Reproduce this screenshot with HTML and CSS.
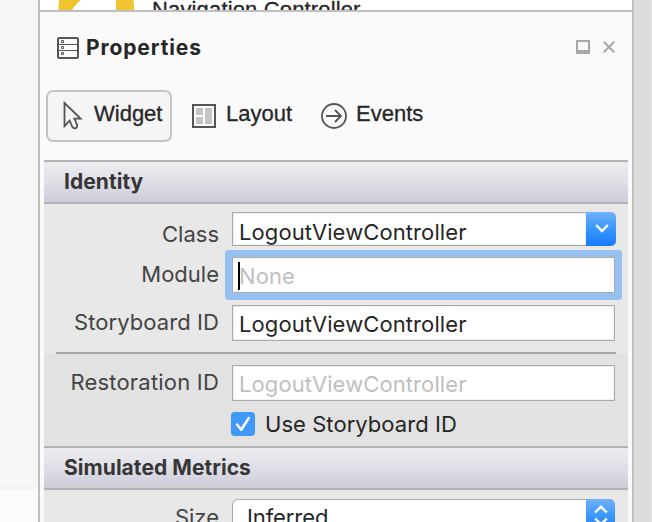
FILE: index.html
```
<!DOCTYPE html>
<html lang="en">
<head>
<meta charset="utf-8">
<title>Properties</title>
<link rel="stylesheet" href="styles.css">
</head>
<body>
<div class="window">
  <div class="gutter-left"><div class="gutter-upper"></div></div>
  <main class="main">
    <div class="canvas-strip">
      <svg class="canvas-icon" width="78" height="10" viewBox="0 0 78 10"><path fill="#f0c330" d="M1 0H23C19 3 16 6 14 10H0.500Q0.500 5 1 0ZM58 0H75.500Q76.200 5 76 10H58Z"/></svg>
      <span class="canvas-title">Navigation Controller</span>
    </div>
    <header class="pad-header">
      <svg class="pad-icon" width="22" height="22" viewBox="0 0 22 22" fill="none" stroke="#555"><rect x="1" y="1" width="20" height="20" rx="1" stroke-width="2"/><path d="M1 7.500H21M1 13.500H21" stroke-width="1.200"/><path d="M4.500 3.500h2v2h-2zM4.500 9.500h2v2h-2zM4.500 15.500h2v2h-2z"/></svg>
      <h1 class="pad-title">Properties</h1>
      <svg class="pad-dock" width="14" height="14" viewBox="0 0 14 14"><path fill="#a8a8a8" fill-rule="evenodd" d="M0 0H14V14H0ZM2 2V10H12V2Z"/></svg>
      <svg class="pad-close" width="12" height="12" viewBox="0 0 12 12"><path d="M.7.700 11.300 11.300M11.300.700.700 11.300" stroke="#a8a8a8" stroke-width="2.100"/></svg>
    </header>
    <nav class="tabs">
      <div class="tab tab-active">
        <svg class="tab-cursor" width="20" height="30" viewBox="0 0 20 30" fill="none" stroke="#555" stroke-width="1.800"><path d="M1.500 3V26.200L6.600 20.600 9.300 26.800Q10.600 29 12.700 28.100 14.800 27 14 24.600L11.400 18.600H17.600Z" stroke-linejoin="miter"/></svg>
        <span class="tab-label">Widget</span>
      </div>
      <div class="tab tab-layout">
        <svg width="24" height="24" viewBox="0 0 24 24"><rect x="1" y="1" width="22" height="22" fill="#fcfcfc" stroke="#555" stroke-width="2"/><path fill="#c5c5c5" d="M4 4h7v7H4zM4 13h7v7H4zM13 4h7v16h-7z"/></svg>
        <span class="tab-label">Layout</span>
      </div>
      <div class="tab tab-events">
        <svg width="26" height="26" viewBox="0 0 26 26" fill="none" stroke="#555" stroke-width="1.800"><circle cx="13" cy="13" r="12"/><path d="M5 13H20M14 7l6 6-6 6"/></svg>
        <span class="tab-label">Events</span>
      </div>
    </nav>
    <section class="sections">
      <h2 class="section-title">Identity</h2>
      <div class="group">
        <div class="row row-class">
          <label class="label label-class">Class</label>
          <div class="field combo"><span class="value">LogoutViewController</span></div>
          <div class="drop"><svg width="14" height="9" viewBox="0 0 14 9"><path d="M1.200 1.200 7 7 12.800 1.200" fill="none" stroke="#fff" stroke-width="2.400"/></svg></div>
        </div>
        <div class="row row-module">
          <label class="label">Module</label>
          <div class="field focused"><span class="caret"></span><span class="value hint">None</span></div>
        </div>
        <div class="row">
          <label class="label storyboard">Storyboard ID</label>
          <div class="field"><span class="value">LogoutViewController</span></div>
        </div>
        <div class="divider"></div>
      </div>
      <div class="group group-restoration">
        <div class="row">
          <label class="label restoration">Restoration ID</label>
          <div class="field"><span class="value hint">LogoutViewController</span></div>
        </div>
        <div class="check-row">
          <div class="checkbox"><svg width="24" height="24" viewBox="0 0 24 24"><path d="M6 12.500 10.200 17.800 17.800 6" fill="none" stroke="#fff" stroke-width="2.500" stroke-linecap="round" stroke-linejoin="round"/></svg></div>
          <span class="check-label">Use Storyboard ID</span>
        </div>
      </div>
      <h2 class="section-title simulated">Simulated Metrics</h2>
      <div class="group group-metrics">
        <div class="row">
          <label class="label label-size">Size</label>
          <div class="field select"><span class="value">Inferred</span></div>
          <div class="drop stepper"><svg width="14" height="22" viewBox="0 0 14 22"><path d="M1.200 7.500 7 1.700 12.800 7.500M1.200 13.500 7 19.300 12.800 13.500" fill="none" stroke="#fff" stroke-width="2.400"/></svg></div>
        </div>
      </div>
    </section>
  </main>
  <div class="gutter-right"></div>
</div>
</body>
</html>
```
FILE: styles.css
```
* { box-sizing: border-box; }
body { margin: 0; overflow: hidden; font: 22px/24px Inter, "Liberation Sans", sans-serif; color: #262626; }
h1, h2 { margin: 0; }
svg { display: block; flex: none; }
.window { display: flex; width: 652px; height: 522px; overflow: hidden; background: #fafafa; }
.gutter-left { width: 38px; flex: none; background: #fbfbfb; }
.gutter-upper { height: 490px; background: #f8f8f8; border-right: 4px solid #f5f5f5; border-bottom: 6px solid #f5f5f5; }
.main { width: 596px; flex: none; border: solid #bfbfbf; border-width: 0 2px; }
.gutter-right { flex: 1; background: #ddd; border-right: 1px solid #e2e2e2; }

.canvas-strip { display: flex; height: 12px; padding-left: 18px; overflow: hidden; background: #fff; border-bottom: 2px solid #bfbfbf; }
.canvas-title { margin: -2px 0 0 16px; font-family: "Liberation Sans", sans-serif; letter-spacing: .15px; white-space: nowrap; -webkit-text-stroke: .3px #262626; }

.pad-header { display: flex; height: 78px; padding: 23px 17px 0 17px; }
.pad-icon { margin-top: 2px; }
.pad-title { margin: 1px 0 0 7px; font-size: 21px; line-height: 24px; font-weight: 700; letter-spacing: .9px; }
.pad-dock { margin: 5px 13px 0 auto; }
.pad-close { margin-top: 6px; }

.tabs { display: flex; height: 70px; padding-left: 6px; font-family: "Liberation Sans", sans-serif; }
.tab { display: flex; padding-top: 13px; }
.tab-label { margin: -2px 0 0 10px; -webkit-text-stroke: .3px #262626; }
.tab-active { width: 126px; height: 52px; padding: 8px 0 0 15px; border: 2px solid #c4c4c4; border-radius: 7px; background: #f5f5f5; }
.tab-active .tab-label { margin: 2px 0 0 11px; }
.tab-layout { margin-left: 20px; padding-top: 14px; }
.tab-events { margin-left: 29px; }
.tab-events .tab-label { margin: -1px 0 0 9px; }

.sections { margin: 0 4px; }
.section-title { height: 44px; padding: 8px 0 0 20px; border: solid #b3b3b3; border-width: 2px 0; background: linear-gradient(#eeedf0, #dddde6 55%, #cdcdda); font-size: 21px; line-height: 24px; font-weight: 700; letter-spacing: .05px; color: #363636; }
.group { height: 150px; padding: 8px 0 0; background: #e8e8e8; }
.group-restoration { height: 92px; padding-top: 11px; background: #e2e2e2; }
.group-metrics { height: 32px; padding-top: 9px; overflow: hidden; }
.row { display: flex; height: 36px; }
.row-class { height: 34px; margin-bottom: 11px; }
.row-module { margin-bottom: 12px; }
.label { width: 175px; margin-right: 13px; padding-top: 5px; flex: none; text-align: right; color: #444; white-space: nowrap; }
.storyboard { letter-spacing: .08px; }
.restoration { letter-spacing: .2px; }
.label-class { padding-top: 10px; }
.label-size { padding-top: 6px; }
.field { display: flex; width: 383px; height: 36px; padding: 6px 0 0 6px; border: 1px solid #aaa; background: #fff; box-shadow: inset 0 0 0 1px #f0f0f0; }
.value { letter-spacing: .1px; }
.hint { color: #bfbfbf; }
.combo { width: 354px; height: 34px; padding-top: 7px; border-right: 0; }
.focused { padding: 4px 0 0 5px; box-shadow: 0 0 0 7px #96c0f0; border-radius: 1px; }
.focused .value { padding-top: 2px; }
.caret { width: 2px; height: 28px; margin-right: -1px; background: #000; }
.drop { display: flex; width: 30px; height: 34px; align-items: center; justify-content: center; border-radius: 0 5px 5px 0; background: linear-gradient(#6fb2f8, #3996fb 50%, #1a7bfd); }
.row-class .drop svg { margin: -1px 0 0 1px; }
.divider { height: 2px; margin: 11px 12px 0; background: #a5a5a5; }
.check-row { display: flex; margin: 11px 0 0 187px; }
.checkbox { width: 24px; height: 24px; border-radius: 4px; background: #4099fa; }
.check-label { margin-left: 10px; letter-spacing: .05px; }
.select { width: 354px; padding: 5px 0 0 14px; border-radius: 6px 0 0 0; border-right: 0; box-shadow: none; }
.select .value { letter-spacing: -.1px; }
.stepper { width: 29px; height: 36px; align-items: flex-start; padding-top: 6px; }
```
